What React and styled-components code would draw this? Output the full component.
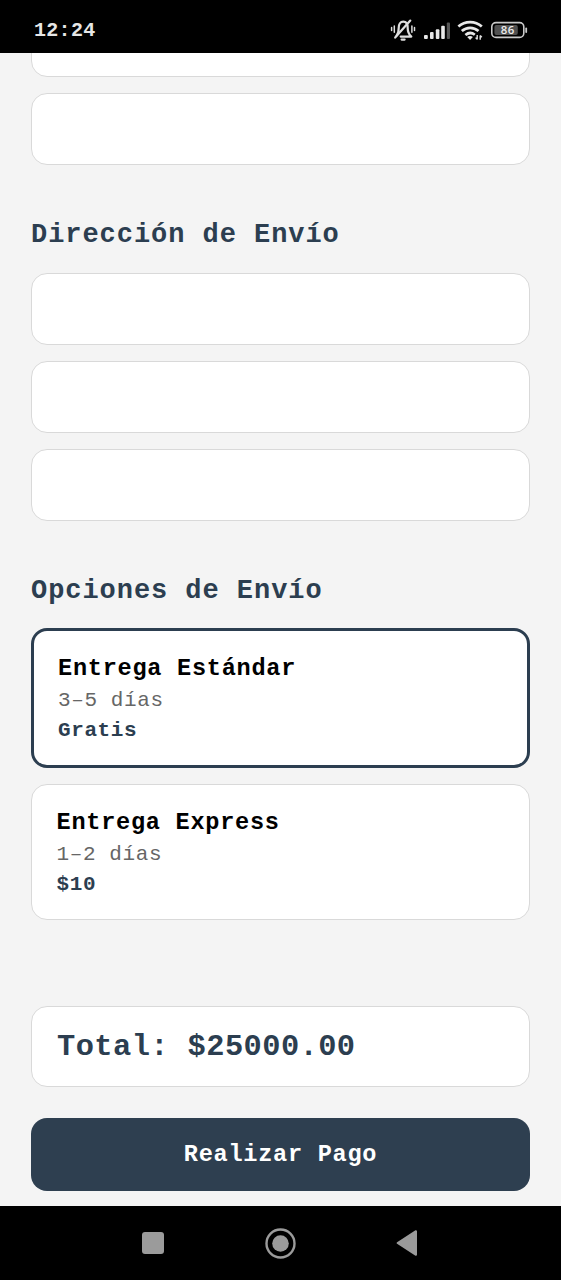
import React from 'react'
import styled, { createGlobalStyle } from 'styled-components'

const GlobalStyle = createGlobalStyle`
  *{
    box-sizing: border-box;
  }
  body{
    margin: 0;
    background: #f4f4f4;
    font-family: "Liberation Mono", "Courier New", monospace;
  }
`

const Screen = styled.div`
  display: flex;
  flex-direction: column;
  width: 561px;
  height: 1280px;
  overflow: hidden;
`

const StatusBar = styled.div`
  flex: none;
  display: flex;
  align-items: center;
  justify-content: space-between;
  height: 53px;
  padding: 8px 33px 0 34px;
  background: #000;
  color: #e6e6e6;
`

const Clock = styled.div`
  font-size: 20px;
  line-height: 24px;
  font-weight: 700;
  letter-spacing: .3px;
`

const StatusIcons = styled.div`
  display: flex;
  align-items: center;
  margin-top: -1px;
  svg{
    display: block;
  }
`

const Content = styled.div`
  flex: 1;
  min-height: 0;
  overflow: hidden;
  padding: 0 31px;
  background: #f4f4f4;
`

const Fields = styled.div`
  display: flex;
  flex-direction: column;
  gap: 16px;
  margin-top: ${props => props.$scrolled ? '-48px' : '0'};
`

const Field = styled.div`
  height: 72px;
  background: #fff;
  border: 1px solid #d9d9d9;
  border-radius: 16px;
`

const Heading = styled.h2`
  margin: 52px 0 ${props => props.$tight ? '19px' : '20px'};
  color: #2c3e50;
  font-size: 27px;
  line-height: 36px;
  font-weight: 700;
  letter-spacing: .95px;
  white-space: pre;
`

const Options = styled.div`
  display: flex;
  flex-direction: column;
  gap: 16px;
`

const Option = styled.div`
  height: ${props => props.$selected ? '140px' : '136px'};
  padding: ${props => props.$selected ? '23px 24px' : '23px 24.5px'};
  background: #fff;
  border: ${props => props.$selected ? '3px solid #2c3e50' : '1px solid #d9d9d9'};
  border-radius: 16px;
`

const OptionTitle = styled.div`
  color: #000;
  font-size: 23.6px;
  line-height: 30px;
  font-weight: 700;
  letter-spacing: .72px;
`

const OptionTime = styled.div`
  margin-top: 2px;
  color: #666;
  font-size: 21px;
  line-height: 30px;
  letter-spacing: .6px;
`

const OptionPrice = styled.div`
  color: #2c3e50;
  font-size: 21px;
  line-height: 30px;
  font-weight: 700;
  letter-spacing: .6px;
`

const Total = styled.div`
  display: flex;
  align-items: center;
  height: 81px;
  margin-top: 86px;
  padding: 0 25px;
  background: #fff;
  border: 1px solid #d9d9d9;
  border-radius: 16px;
  color: #2c3e50;
  font-size: 30.4px;
  line-height: 40px;
  font-weight: 700;
  letter-spacing: .42px;
`

const PayButton = styled.button`
  display: block;
  width: 100%;
  height: 73px;
  margin-top: 31px;
  padding: 0;
  border: 0;
  border-radius: 16px;
  background: #2e3f50;
  color: #fff;
  font-family: inherit;
  font-size: 23.6px;
  line-height: 30px;
  font-weight: 700;
  letter-spacing: .72px;
`

const NavBar = styled.div`
  flex: none;
  display: flex;
  align-items: center;
  height: 74px;
  padding-left: 141px;
  background: #000;
`

const HomeIcon = styled.svg`
  margin: 0 100px;
`

const shippingOptions = [
  { id: 'standard', title: 'Entrega Estándar', time: '3–5 días', price: 'Gratis' },
  { id: 'express', title: 'Entrega Express', time: '1–2 días', price: '$10' }
]

const StatusGlyphs = () => (
  <svg width="138" height="24" viewBox="390 18 138 24" fill="none">
    {/* silenced bell */}
    <g stroke="#dedede" strokeWidth="2.2" strokeLinecap="round" strokeLinejoin="round">
      <path d="M396.6 35.4c1.6-1.7 2.1-3.6 2.1-7.4 0-3.6 1.7-6.3 4.6-6.3s4.4 2.4 4.4 6.3c0 4.2.6 6 3.6 8.6h-10.6" />
      <path d="M410.3 20.6L395.2 37.6" />
      <path d="M401.6 39.6h3" />
      <path d="M391.6 27.6v3M394.3 26v6.2M414.5 27.6v3M411.9 26v6.2" strokeWidth="1.5" />
    </g>
    {/* signal */}
    <g fill="#e8e8e8">
      <rect x="424" y="35" width="3.8" height="4" rx="1" />
      <rect x="430" y="32" width="3.6" height="7" rx="1" />
      <rect x="435.8" y="29.2" width="3.6" height="9.8" rx="1" />
      <rect x="441.2" y="25.8" width="3.6" height="13.2" rx="1" />
      <rect x="446.8" y="22.4" width="3.2" height="16.6" rx="1" fill="#555" />
    </g>
    {/* wifi */}
    <g stroke="#e8e8e8" strokeWidth="2.7">
      <path d="M458.4 26.6c6.6-6 16.8-6 23.4 0" />
      <path d="M461.8 31c4.9-4.3 11.8-4.3 16.7 0" />
      <path d="M465.4 35c2.9-2.4 6.6-2.4 9.4-.2" />
    </g>
    <path d="M467.2 37c1.7-1.2 4-1.2 5.7 0l-2.8 2.9z" fill="#e8e8e8" />
    <path d="M477.2 35v4.4M475.6 37.6l1.6 1.8M480.2 39.8v-4.4M481.8 37.2l-1.6-1.8" stroke="#e0e0e0" strokeWidth="1.4" />
    {/* battery */}
    <rect x="491.8" y="22.6" width="32" height="14.8" rx="4.2" stroke="#c9c9c9" strokeWidth="1.6" />
    <rect x="494.4" y="25.1" width="23.4" height="9.8" rx="2" fill="#505050" />
    <path d="M526.2 28.4v3.6" stroke="#c9c9c9" strokeWidth="1.8" strokeLinecap="round" />
    <text x="507.8" y="34.1" fill="#ededed" fontFamily="Open Sans, sans-serif" fontSize="11.4" fontWeight="600" textAnchor="middle" letterSpacing=".6">86</text>
  </svg>
)

export default class App extends React.Component {

  state = {selected: 'standard'}

  render () {

    const {selected} = this.state

    return (
      <Screen>
        <GlobalStyle/>
        <StatusBar>
          <Clock>12:24</Clock>
          <StatusIcons><StatusGlyphs/></StatusIcons>
        </StatusBar>
        <Content>
          <Fields $scrolled>
            <Field/>
            <Field/>
          </Fields>
          <Heading>Dirección de Envío</Heading>
          <Fields>
            <Field/>
            <Field/>
            <Field/>
          </Fields>
          <Heading $tight>Opciones de Envío</Heading>
          <Options>
            {shippingOptions.map((option) => (
              <Option
                key={option.id}
                $selected={option.id === selected}
                onClick={() => this.setState({selected: option.id})}>
                <OptionTitle>{option.title}</OptionTitle>
                <OptionTime>{option.time}</OptionTime>
                <OptionPrice>{option.price}</OptionPrice>
              </Option>
            ))}
          </Options>
          <Total>Total: $25000.00</Total>
          <PayButton>Realizar Pago</PayButton>
        </Content>
        <NavBar>
          <svg width="24" height="24" viewBox="0 0 24 24">
            <rect x="1" y="1" width="22" height="22" rx="3" fill="#9b9b9b"/>
          </svg>
          <HomeIcon width="31" height="31" viewBox="0 0 31 31" fill="none">
            <circle cx="15.5" cy="15.5" r="14" stroke="#9b9b9b" strokeWidth="2.4"/>
            <circle cx="15.5" cy="15.5" r="8.3" fill="#9b9b9b"/>
          </HomeIcon>
          <svg width="22" height="28" viewBox="0 0 22 28">
            <path d="M1.6 14L20 2.2v23.6z" fill="#9b9b9b" stroke="#9b9b9b" strokeWidth="2" strokeLinejoin="round"/>
          </svg>
        </NavBar>
      </Screen>)

  }
}
